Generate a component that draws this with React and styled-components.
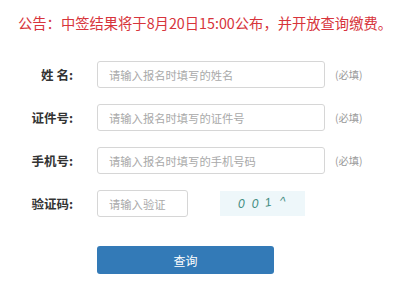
import React from 'react';
import styled, { createGlobalStyle } from 'styled-components';

const GlobalStyle = createGlobalStyle`
  html, body {
    margin: 0;
    padding: 0;
    background: #ffffff;
    font-family: "Microsoft YaHei", "Noto Sans CJK SC", "Liberation Sans", sans-serif;
  }
`;

const Page = styled.div`
  width: 400px;
  height: 300px;
  overflow: hidden;
  padding-top: 13px;
  box-sizing: border-box;
`;

const Notice = styled.p`
  margin: 0 0 0 18px;
  color: #d7343b;
  font-size: 14.3px;
  line-height: 20px;
  white-space: nowrap;
`;

const Form = styled.div`
  display: flex;
  flex-direction: column;
  gap: 16px;
  margin-top: 28px;
`;

const Row = styled.div`
  display: flex;
  align-items: center;
  height: 27px;
`;

const Label = styled.label`
  width: 73px;
  margin-right: 24px;
  text-align: right;
  font-size: 12.5px;
  font-weight: bold;
  color: #333;
  white-space: nowrap;
`;

const Input = styled.input`
  box-sizing: border-box;
  width: ${p => p.$w || 228}px;
  height: 27px;
  border: 1px solid #d6d6d6;
  border-radius: 3px;
  padding: 0 11px;
  font-size: 11.3px;
  font-family: inherit;
  outline: none;
  &::placeholder {
    color: #a9a9a9;
  }
`;

const Hint = styled.span`
  margin-left: 10px;
  font-size: 10.3px;
  color: #9a9a9a;
`;

const Captcha = styled.div`
  margin-left: 32px;
  width: 85px;
  height: 25px;
  background: #eef7fa;
  display: flex;
  align-items: center;
  padding-left: 18px;
  box-sizing: border-box;
  gap: 6px;
  color: #3f8c80;
  font-style: italic;
  font-size: 12px;
  font-family: "Liberation Sans", sans-serif;
  letter-spacing: 1px;
`;

const Glyph = styled.span`
  display: inline-block;
  transform: rotate(${p => p.$r || 0}deg) translateY(${p => p.$y || 0}px);
`;

const Submit = styled.button`
  margin: 29px 0 0 97px;
  width: 177px;
  height: 28px;
  border: none;
  border-radius: 3px;
  background: #337ab7;
  color: #fff;
  font-size: 12px;
  font-family: inherit;
`;

const fields = [
  { label: '姓 名:', ph: '请输入报名时填写的姓名' },
  { label: '证件号:', ph: '请输入报名时填写的证件号' },
  { label: '手机号:', ph: '请输入报名时填写的手机号码' },
];

export default function App() {
  return (
    <Page>
      <GlobalStyle />
      <Notice>公告：中签结果将于8月20日15:00公布，并开放查询缴费。</Notice>
      <Form>
        {fields.map(f => (
          <Row key={f.label}>
            <Label>{f.label}</Label>
            <Input placeholder={f.ph} />
            <Hint>(必填)</Hint>
          </Row>
        ))}
        <Row>
          <Label>验证码:</Label>
          <Input $w={91} placeholder="请输入验证" />
          <Captcha>
            <Glyph>0</Glyph>
            <Glyph>0</Glyph>
            <Glyph $r={-10} $y={-2}>1</Glyph>
            <Glyph $r={10} $y={-3}>^</Glyph>
          </Captcha>
        </Row>
      </Form>
      <Submit>查询</Submit>
    </Page>
  );
}
